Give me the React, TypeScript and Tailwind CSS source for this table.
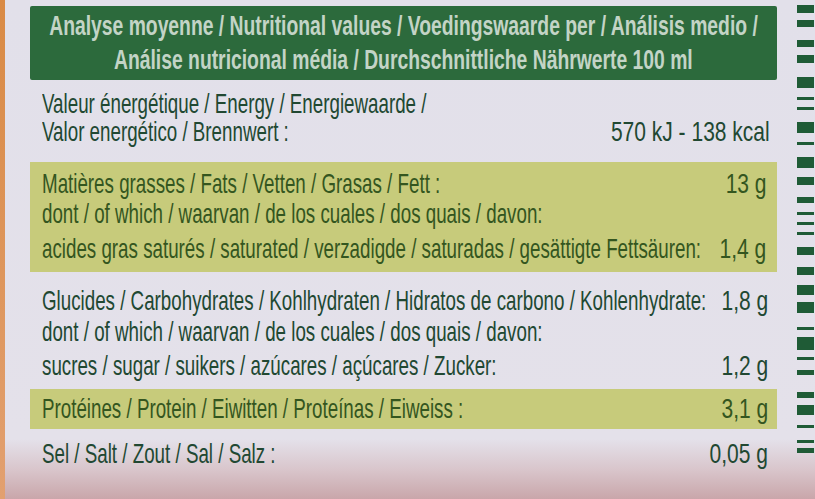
import React from "react";

// stacked dashes on the right edge of the carton
const dashes: [number, number][] = [
  [5, 13], [20, 27], [40, 47], [55, 63], [77, 88], [97, 100], [107, 110], [122, 133],
  [142, 145], [157, 168], [177, 185], [197, 203], [212, 215], [222, 225], [232, 235],
  [247, 255], [267, 275], [285, 295], [302, 313], [327, 330], [337, 350], [357, 360],
  [370, 375], [392, 398], [405, 415], [425, 428], [440, 443], [448, 453],
];

function Row({
  label,
  value,
  className = "",
}: {
  label: string;
  value?: string;
  className?: string;
}) {
  return (
    <div className={"flex items-center " + className}>
      <div className="flex-1 min-w-0">
        <span className="inline-block whitespace-nowrap origin-left scale-x-[0.67]">{label}</span>
      </div>
      {value && (
        <span className="shrink-0 inline-block whitespace-nowrap origin-right scale-x-[0.75]">{value}</span>
      )}
    </div>
  );
}

export default function App() {
  return (
    <div className="w-[815px] h-[499px] overflow-hidden flex bg-[linear-gradient(180deg,#e2e0ea_0%,#e4e1ea_88%,#d9c6cc_94%,#c9a6aa_100%)] font-['Liberation_Sans',Arial,sans-serif] text-[28px] leading-none text-[#214832]">
      <div className="w-[5px] bg-[linear-gradient(180deg,#d98a45,#e2a070)]" />

      <div className="ml-[25px] w-[747px] flex flex-col">
        <div className="mt-[6px] h-[74px] bg-[#2c6a3c] text-[#c3d4c6] font-bold flex flex-col items-center justify-center gap-[6px] rounded-[2px]">
          <span className="inline-block whitespace-nowrap scale-x-[0.69]">
            Analyse moyenne / Nutritional values / Voedingswaarde per / Análisis medio /
          </span>
          <span className="inline-block whitespace-nowrap scale-x-[0.69]">
            Análise nutricional média / Durchschnittliche Nährwerte 100 ml
          </span>
        </div>

        <div className="pl-[12px] pr-[7px] pt-[10px]">
          <Row label="Valeur énergétique / Energy / Energiewaarde /" className="h-[27px]" />
          <Row label="Valor energético / Brennwert  :" value="570 kJ - 138 kcal" className="h-[30px]" />
        </div>

        <div className="mt-[15px] h-[110px] bg-[#c7cb7b] text-[#34561f] pl-[12px] pr-[11px] pt-[9px]">
          <Row label="Matières grasses / Fats / Vetten / Grasas / Fett :" value="13 g" className="h-[26px]" />
          <Row label="dont / of which / waarvan / de los cuales / dos quais / davon:" className="h-[33px]" />
          <Row label="acides gras saturés / saturated / verzadigde / saturadas / gesättigte Fettsäuren:" value="1,4 g" className="h-[38px]" />
        </div>

        <div className="pl-[12px] pr-[9px] pt-[14px]">
          <Row label="Glucides / Carbohydrates / Kohlhydraten / Hidratos de carbono / Kohlenhydrate:" value="1,8 g" className="h-[30px]" />
          <Row label="dont / of which / waarvan / de los cuales / dos quais / davon:" className="h-[32px]" />
          <Row label="sucres / sugar / suikers / azúcares / açúcares / Zucker:" value="1,2 g" className="h-[36px]" />
        </div>

        <div className="mt-[5px] h-[40px] bg-[#c7cb7b] text-[#34561f] pl-[12px] pr-[9px] flex flex-col justify-center">
          <Row label="Protéines / Protein / Eiwitten / Proteínas / Eiweiss :" value="3,1 g" />
        </div>

        <div className="pl-[12px] pr-[9px] pt-[11px]">
          <Row label="Sel / Salt / Zout / Sal / Salz :" value="0,05 g" className="h-[28px]" />
        </div>
      </div>

      <div className="ml-[20px] w-[17px]">
        <svg width="17" height="499" viewBox="0 0 17 499">
          {dashes.map(([a, b]) => (
            <rect key={a} x="0" y={a} width="17" height={b - a} fill="#1f5b36" />
          ))}
        </svg>
      </div>
    </div>
  );
}
